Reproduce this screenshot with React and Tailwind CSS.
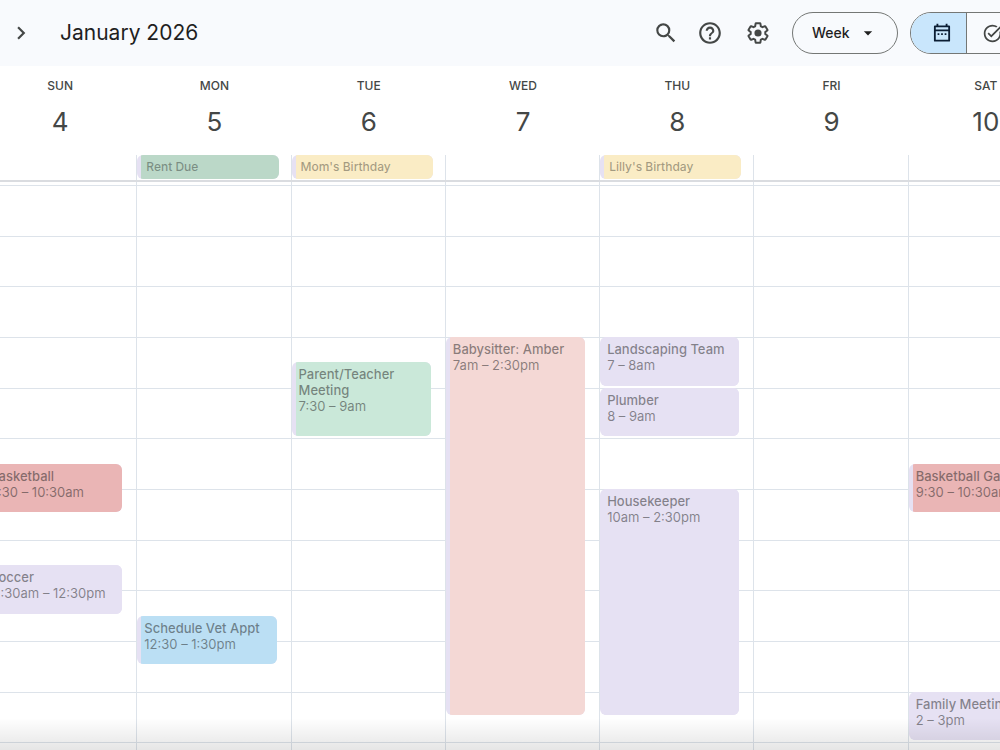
import React, { useState } from "react";
import {
  MdArrowDropDown,
  MdChevronRight,
  MdHelpOutline,
  MdOutlineTaskAlt,
  MdSearch,
} from "react-icons/md";

// first hour shown in the grid
const FIRST_HOUR = 4;
const HOURS = Array.from({ length: 12 }, (_, i) => i);

const COLORS = {
  lavender: "bg-[#e6e1f3]",
  red: "bg-[#eab5b5]",
  blue: "bg-[#bbdff4]",
  green: "bg-[#cae8d9]",
  sage: "bg-[#bbd8c8]",
  yellow: "bg-[#faecc5]",
  pink: "bg-[#f4d8d5]",
};

const DAYS = [
  {
    name: "SUN",
    date: 4,
    events: [
      { title: "Basketball", time: "9:30 – 10:30am", start: 9.5, end: 10.5, color: "red" },
      { title: "Soccer", time: "11:30am – 12:30pm", start: 11.5, end: 12.5, color: "lavender" },
    ],
  },
  {
    name: "MON",
    date: 5,
    allDay: { title: "Rent Due", color: "sage" },
    events: [
      { title: "Schedule Vet Appt", time: "12:30 – 1:30pm", start: 12.5, end: 13.5, color: "blue" },
    ],
  },
  {
    name: "TUE",
    date: 6,
    allDay: { title: "Mom's Birthday", color: "yellow" },
    events: [
      { title: "Parent/Teacher Meeting", time: "7:30 – 9am", start: 7.5, end: 9, color: "green" },
    ],
  },
  {
    name: "WED",
    date: 7,
    events: [
      { title: "Babysitter: Amber", time: "7am – 2:30pm", start: 7, end: 14.5, color: "pink" },
    ],
  },
  {
    name: "THU",
    date: 8,
    allDay: { title: "Lilly's Birthday", color: "yellow" },
    events: [
      { title: "Landscaping Team", time: "7 – 8am", start: 7, end: 8, color: "lavender" },
      { title: "Plumber", time: "8 – 9am", start: 8, end: 9, color: "lavender" },
      { title: "Housekeeper", time: "10am – 2:30pm", start: 10, end: 14.5, color: "lavender" },
    ],
  },
  { name: "FRI", date: 9, events: [] },
  {
    name: "SAT",
    date: 10,
    events: [
      { title: "Basketball Game", time: "9:30 – 10:30am", start: 9.5, end: 10.5, color: "red" },
      { title: "Family Meeting", time: "2 – 3pm", start: 14, end: 15, color: "lavender" },
    ],
  },
];

// outlined gear with a solid centre
const GearIcon = () => (
  <svg width="26" height="26" viewBox="0 0 24 24" fill="none">
    <path
      transform="translate(1.2 1.2) scale(0.9)"
      d="M19.43 12.98c.04-.32.07-.64.07-.98s-.03-.66-.07-.98l2.11-1.65c.19-.15.24-.42.12-.64l-2-3.46a.5.5 0 0 0-.61-.22l-2.49 1c-.52-.4-1.08-.73-1.69-.98l-.38-2.65A.49.49 0 0 0 14 2h-4c-.25 0-.46.18-.49.42l-.38 2.65c-.61.25-1.17.59-1.69.98l-2.49-1a.5.5 0 0 0-.61.22l-2 3.46c-.13.22-.07.49.12.64l2.11 1.65c-.04.32-.07.65-.07.98s.03.66.07.98l-2.11 1.65c-.19.15-.24.42-.12.64l2 3.46a.5.5 0 0 0 .61.22l2.49-1c.52.4 1.08.73 1.69.98l.38 2.65c.03.24.24.42.49.42h4c.25 0 .46-.18.49-.42l.38-2.65c.61-.25 1.17-.59 1.69-.98l2.49 1a.5.5 0 0 0 .61-.22l2-3.46c.12-.22.07-.49-.12-.64z"
      stroke="currentColor"
      strokeWidth="2"
      strokeLinejoin="round"
    />
    <circle cx="12" cy="12" r="3.3" fill="currentColor" />
  </svg>
);

const CalendarIcon = () => (
  <svg width="22" height="22" viewBox="0 0 24 24" fill="none">
    <path
      d="M4.2 4.8h15.6v15.6H4.2z"
      stroke="currentColor"
      strokeWidth="2"
      strokeLinejoin="round"
    />
    <path d="M4 9.2h16M7 1.8v3M17 1.8v3" stroke="currentColor" strokeWidth="2" />
    <path
      d="M7.2 13.2h1.9M11.05 13.2h1.9M14.9 13.2h1.9"
      stroke="currentColor"
      strokeWidth="1.9"
    />
  </svg>
);

const Header = () => {
  const [view, setView] = useState("Week");

  return (
    <header className="flex h-[66px] shrink-0 items-center justify-between bg-[#f8fafd] pl-2 text-[#444746]">
      <div className="flex items-center gap-6">
        <button aria-label="Next week" className="py-px pr-0.5">
          <MdChevronRight size={26} />
        </button>
        <h1 className="text-[21px] leading-7 text-[#1f1f1f]">January 2026</h1>
      </div>

      <div className="-mr-[26px] flex items-center gap-3">
        <div className="flex items-center">
          <button aria-label="Search" className="flex h-11 w-11 items-center justify-center">
            <MdSearch size={26} />
          </button>
          <button aria-label="Support" className="flex h-11 w-11 items-center justify-center">
            <MdHelpOutline size={26} />
          </button>
          <button aria-label="Settings" className="ml-1 flex h-11 w-11 items-center justify-center">
            <GearIcon />
          </button>
        </div>

        <div className="relative">
          <select
            aria-label="Calendar view"
            value={view}
            onChange={(e) => setView(e.target.value)}
            className="h-[42px] w-[106px] appearance-none rounded-full border border-[#747775] pl-[19px] text-sm font-medium text-[#1f1f1f]"
          >
            <option>Day</option>
            <option>Week</option>
            <option>Month</option>
          </select>
          <MdArrowDropDown
            size={20}
            className="pointer-events-none absolute top-[11px] right-5 text-[#1f1f1f]"
          />
        </div>

        <div className="flex h-[42px] w-[116px] overflow-hidden rounded-full border border-[#747775]">
          <button
            aria-label="Calendar"
            className="flex w-14 items-center justify-center border-r border-[#747775] bg-[#c9e6fc] pl-1.5 text-[#0b1d33]"
          >
            <CalendarIcon />
          </button>
          <button aria-label="Tasks" className="flex flex-1 items-center justify-center pr-2">
            <MdOutlineTaskAlt size={21} />
          </button>
        </div>
      </div>
    </header>
  );
};

const AllDayEvent = ({ event }) => (
  <div className="mr-3 flex h-6 overflow-hidden rounded-md bg-[#e6e1f3]">
    <div className={`ml-1 flex-1 pl-[5px] text-[12px] leading-6 font-medium text-black/35 ${COLORS[event.color]}`}>
      {event.title}
    </div>
  </div>
);

const TimedEvent = ({ event }) => {
  const from = (event.start - FIRST_HOUR) * 2 + 1;
  const to = (event.end - FIRST_HOUR) * 2 + 1;

  return (
    <div
      className="z-10 col-start-1 mr-[14px] mb-0.5 flex overflow-hidden rounded-md bg-[#e6e1f3]"
      style={{ gridRow: `${from} / ${to}` }}
    >
      <div className={`ml-1 flex-1 pt-1 pl-[3px] text-[13px] leading-4 text-[#1f1f1f]/50 ${COLORS[event.color]}`}>
        <p className="font-medium">{event.title}</p>
        <p>{event.time}</p>
      </div>
    </div>
  );
};

const App = () => {
  return (
    <div className="relative flex h-screen flex-col overflow-hidden bg-white font-[Inter,sans-serif]">
      <Header />

      {/* day names, dates and all-day events */}
      <div className="-mr-[62px] -ml-[18px] grid shrink-0 grid-cols-7 border-b-2 border-[#dadce0] text-[#444746]">
        {DAYS.map((day) => (
          <div key={day.name}>
            <div className="pt-3 pl-0.5 text-center">
              <p className="text-[12px] leading-4 font-medium">{day.name}</p>
              <p className="mt-2.5 text-[26px] leading-9">{day.date}</p>
            </div>
            <div className="mt-[15px] h-[25px] border-l border-[#dde3ea]">
              {day.allDay && <AllDayEvent event={day.allDay} />}
            </div>
          </div>
        ))}
      </div>

      {/* hour grid */}
      <main className="-mr-[62px] -ml-[18px] grid min-h-0 flex-1 grid-cols-7 overflow-hidden">
        {DAYS.map((day) => (
          <div key={day.name} className="border-l border-[#dde3ea] pt-[3px]">
            <div className="grid h-[608px] grid-cols-1 grid-rows-24">
              {HOURS.map((h) => (
                <div
                  key={h}
                  className="col-start-1 border-t border-[#dde3ea]"
                  style={{ gridRow: `${h * 2 + 1} / span 2` }}
                />
              ))}
              {day.events.map((event) => (
                <TimedEvent key={event.title} event={event} />
              ))}
            </div>
          </div>
        ))}
      </main>

      <div className="pointer-events-none absolute inset-x-0 bottom-0 z-20 h-8 bg-linear-to-t from-black/10 to-transparent" />
    </div>
  );
};

export default App;
